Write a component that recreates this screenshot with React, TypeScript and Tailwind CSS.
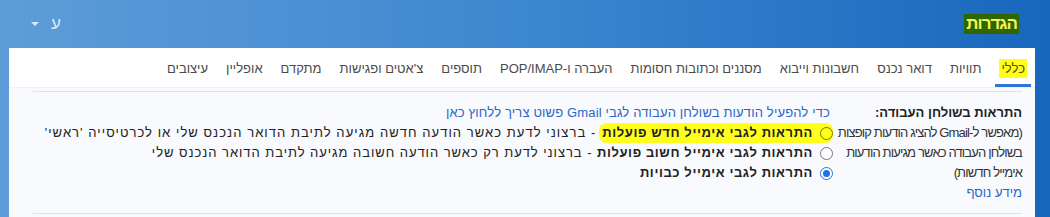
import React from "react";

const tabs = [
  "כללי",
  "תוויות",
  "דואר נכנס",
  "חשבונות וייבוא",
  "מסננים וכתובות חסומות",
  "העברה ו-POP/IMAP",
  "תוספים",
  "צ'אטים ופגישות",
  "מתקדם",
  "אופליין",
  "עיצובים",
];

const Radio = ({ checked, marked }: { checked?: boolean; marked?: boolean }) => (
  <span
    className={
      "flex h-[13px] w-[13px] shrink-0 items-center justify-center rounded-full border " +
      (checked ? "border-[#1a73e8] bg-white" : marked ? "border-[#77770a]" : "border-[#757575] bg-white")
    }
  >
    {checked && <span className="h-[7px] w-[7px] rounded-full bg-[#1a73e8]" />}
  </span>
);

export default function App() {
  return (
    <div
      dir="rtl"
      className="flex h-[217px] w-[1050px] flex-col overflow-hidden bg-gradient-to-l from-[#1767bd] via-[#3d87d0] to-[#5d9dd8] text-[13px] text-[#222]"
      style={{ fontFamily: '"Liberation Sans", Arial, sans-serif' }}
    >
      {/* header */}
      <div className="flex h-[48px] shrink-0 items-center justify-between pl-[31px] pr-[31px]">
        <span className="bg-[#2f6600] px-[2px] text-[17px] font-bold leading-[20px] tracking-[-1px] text-[#f2f25a]">הגדרות</span>
        <div className="flex items-center gap-[12px] text-[#dfe8f3]">
          <span className="text-[17px]">ע</span>
          <span className="h-0 w-0 border-x-[4px] border-t-[4px] border-x-transparent border-t-[#dfe8f3]" />
        </div>
      </div>

      {/* panel */}
      <div className="ml-[9px] mr-[15px] flex flex-1 flex-col bg-white">
        <div className="flex h-[40px] shrink-0 items-stretch gap-[10px] border-b border-[#eef1f5] pr-[4px] text-[13px] text-[#4a4a4a]">
          {tabs.map((t, i) => (
            <div key={t} className="relative flex items-center px-[4px] pt-[2px]">
              <span className={i === 0 ? "bg-[#ffff1a] px-[2px] text-[#555500]" : ""}>{t}</span>
              {i === 0 && <span className="absolute bottom-0 left-0 right-0 h-[3px] bg-[#2f76d8]" />}
            </div>
          ))}
        </div>

        <div className="flex-1 bg-[#f8fafd] pl-[24px] pr-[13px] pt-[3px]">
          <div className="flex border-y border-[#dfe3e8] pb-[10px] pt-[11px] leading-[20px]">
            <div className="w-[189px] shrink-0 text-[#333]">
              <div className="font-bold text-[#222]">התראות בשולחן העבודה:</div>
              <div className="whitespace-nowrap tracking-[-0.85px]">(מאפשר ל-Gmail להציג הודעות קופצות</div>
              <div className="whitespace-nowrap tracking-[-0.85px]">בשולחן העבודה כאשר מגיעות הודעות</div>
              <div className="whitespace-nowrap tracking-[-0.85px]">אימייל חדשות)</div>
              <a className="text-[#2a66c9]">מידע נוסף</a>
            </div>
            <div className="flex flex-col">
              <a className="pr-[3px] tracking-[0.15px] text-[#2a66c9]">כדי להפעיל הודעות בשולחן העבודה לגבי Gmail פשוט צריך ללחוץ כאן</a>
              <div className="flex items-center gap-[7px] whitespace-nowrap">
                <span className="flex items-center gap-[7px] rounded-[8px] bg-[#ffff1a] pl-[3px]">
                  <Radio marked />
                  <b className="tracking-[0.6px]">התראות לגבי אימייל חדש פועלות</b>
                </span>
                <span className="-mr-[4px] tracking-[1.05px]">- ברצוני לדעת כאשר הודעה חדשה מגיעה לתיבת הדואר הנכנס שלי או לכרטיסייה 'ראשי'</span>
              </div>
              <div className="flex items-center gap-[7px] whitespace-nowrap">
                <Radio />
                <span className="tracking-[0.95px]">
                  <b className="tracking-[0.6px]">התראות לגבי אימייל חשוב פועלות</b> - ברצוני לדעת רק כאשר הודעה חשובה מגיעה לתיבת הדואר הנכנס שלי
                </span>
              </div>
              <div className="flex items-center gap-[7px]">
                <Radio checked />
                <b className="tracking-[0.6px]">התראות לגבי אימייל כבויות</b>
              </div>
            </div>
          </div>
        </div>
      </div>
    </div>
  );
}
